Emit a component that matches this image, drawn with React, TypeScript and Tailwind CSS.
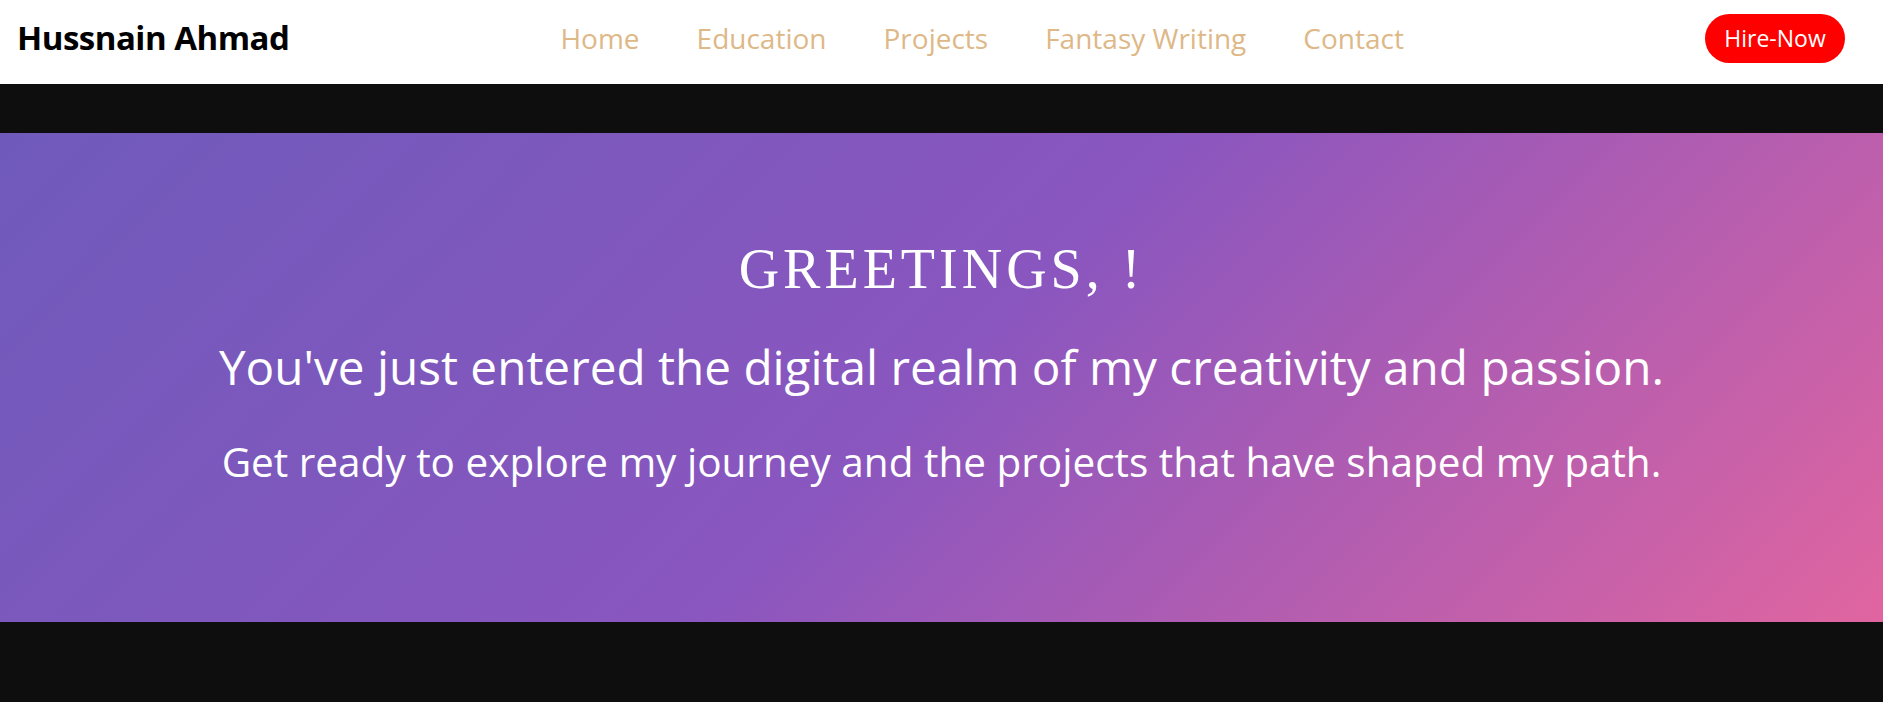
import React from "react";

const sans = "font-['Open_Sans',sans-serif]";

export default function App() {
  const links = ["Home", "Education", "Projects", "Fantasy Writing", "Contact"];
  return (
    <div className={`min-h-[702px] w-full bg-[#0e0e0e] ${sans}`}>
      <nav className="flex h-[84px] items-center bg-white pb-[8px] pl-[17px] pr-[38px]">
        <div className="text-[33px] font-bold tracking-[-0.5px] text-black">Hussnain Ahmad</div>
        <ul className="flex flex-1 items-center justify-center gap-[57px] pr-[30px]">
          {links.map((l) => (
            <li key={l} className="text-[28px] font-medium text-[#deb887]">
              {l}
            </li>
          ))}
        </ul>
        <button className="flex h-[49px] w-[140px] items-center justify-center rounded-full bg-[#ff0000] text-[23px] text-white">
          Hire-Now
        </button>
      </nav>
      <div className="h-[49px]" />
      <section className="flex h-[489px] flex-col items-center bg-[linear-gradient(135deg,#6f5abb_0%,#8a56bf_50%,#e065a0_100%)] pt-[108px] text-white">
        <h1 className="font-['Liberation_Serif',serif] text-[56px] leading-none tracking-[4px]">GREETINGS, !</h1>
        <p className="mt-[46px] text-[47.7px] leading-none">
          You've just entered the digital realm of my creativity and passion.
        </p>
        <p className="mt-[51px] text-[40.5px] leading-none">
          Get ready to explore my journey and the projects that have shaped my path.
        </p>
      </section>
    </div>
  );
}
